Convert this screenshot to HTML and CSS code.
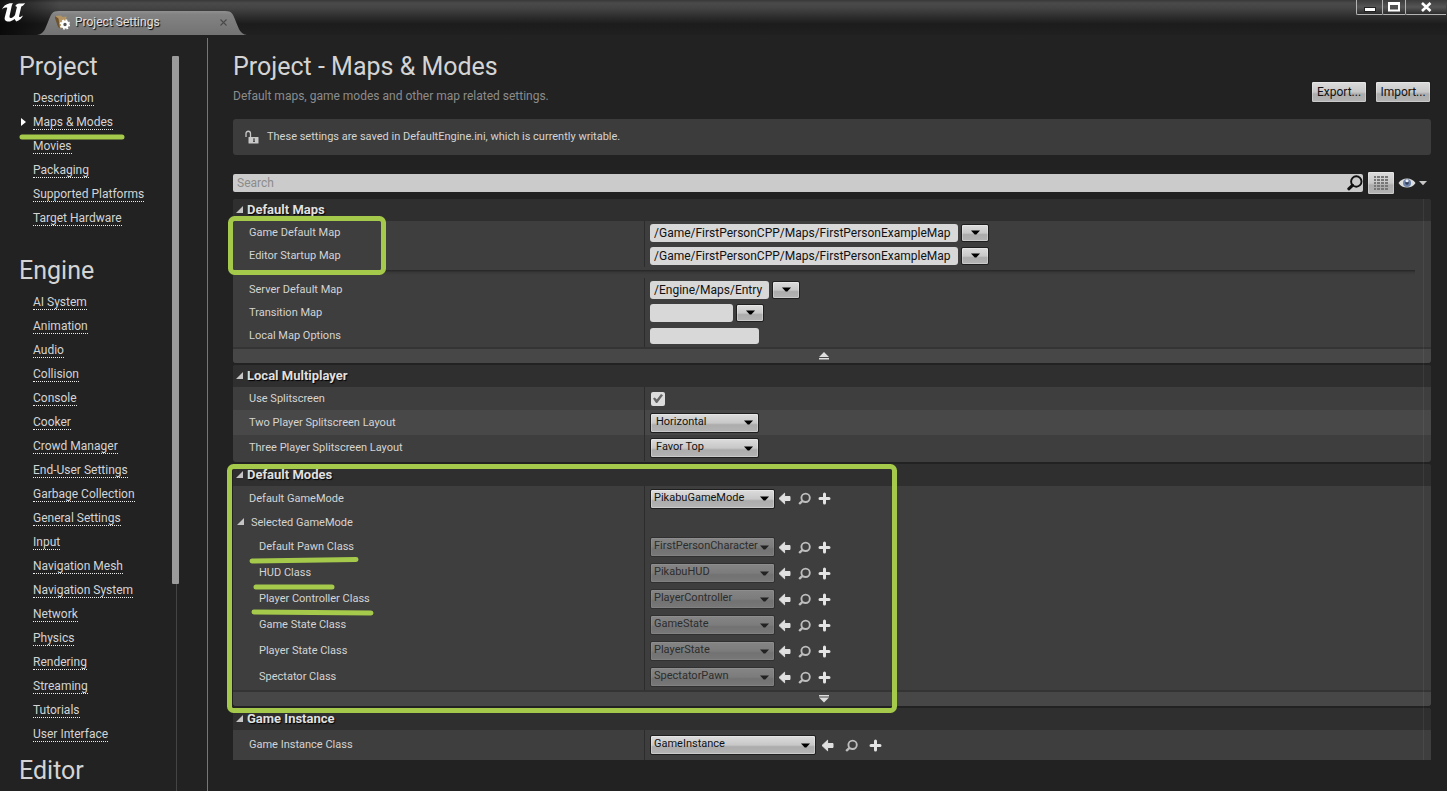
FILE: index.html
```html
<!DOCTYPE html>
<html lang="en">
<head>
<meta charset="utf-8">
<title>Project Settings</title>
<link rel="stylesheet" href="styles.css">
</head>
<body>
<svg class="defs" aria-hidden="true">
  <symbol id="back" viewBox="0 0 13 13"><path d="M1 6.500 6.600 1.200V4.500H12V8.500H6.600V11.800Z" fill="#e0e0e0" stroke="#e0e0e0" stroke-width="1" stroke-linejoin="round"/></symbol>
  <symbol id="find" viewBox="0 0 13 13"><circle cx="7.600" cy="5.800" r="4.200" fill="none" stroke="#bdbdbd" stroke-width="1.900"/><path d="M4 9.300 1.800 11.300" stroke="#bdbdbd" stroke-width="2.400" stroke-linecap="round"/></symbol>
  <symbol id="plus" viewBox="0 0 13 13"><path d="M6.500 2V11M2 6.500H11" stroke="#e4e4e4" stroke-width="3" stroke-linecap="round"/></symbol>
  <symbol id="down" viewBox="0 0 9 5"><path d="M0 0.500H9L5.300 4.500H3.700Z"/></symbol>
  <symbol id="fold" viewBox="0 0 7 7"><path d="M7 0V7H0Z" fill="#c4c4c4"/></symbol>
</svg>

<header class="titlebar">
  <svg class="logo" viewBox="0 0 24 22" aria-label="Unreal"><path d="M1 9.500C2 6.500 4.500 4 8.800 3.200H12C11.200 4 10.900 5 10.600 6.500L8.600 15.800C8.200 17.600 9 18.300 10.300 17.900 11.800 17.400 13.200 16.200 14 15L16 6.800C14.800 6.500 14.200 6 14.500 5.400 15.500 3.900 18 3.600 20 3.600 21.500 3.600 22.800 3.400 24 2.900 23.200 4.900 21.800 6 20.300 6.400L18.200 15.400C17.900 16.700 18.300 17.300 19.300 16.900L22 15.400C20.800 18.200 18.400 20.200 15.200 21.600L13.600 18.900C11.300 20.900 8.300 22 5.600 21.200 3.600 20.600 3.300 19 3.900 16.800L6.300 7.700C4.200 7.100 2.300 7.800 1 9.500Z" fill="#fff"/></svg>
  <div class="tab">
    <svg class="tab-shape" viewBox="0 0 210 24" preserveAspectRatio="none" aria-hidden="true"><defs><linearGradient id="tg" x2="0" y2="1"><stop offset="0" stop-color="#909090"/><stop offset=".15" stop-color="#828282"/><stop offset="1" stop-color="#737373"/></linearGradient></defs><path d="M0 24C7 23 8 18 11 11 14 3 15 0 22 0H188C195 0 196 3 199 11 202 18 203 23 210 24Z" fill="url(#tg)"/></svg>
    <svg class="tab-icon" viewBox="0 0 16 16" aria-hidden="true"><path d="M1 2 5 4 6 14.5 4 13 1 4Z" fill="#6d532f"/><path d="M1 2 7 1.500 8.500 3 12.500 2.500 11.500 13 6 14.500 4.500 4.500Z" fill="#b39462"/><circle cx="11" cy="10.500" r="2.900" fill="#555" stroke="#fff" stroke-width="2.400"/><circle cx="11" cy="10.500" r="4.500" fill="none" stroke="#fff" stroke-width="1.500" stroke-dasharray="1.800 1.740"/></svg>
    <span class="tab-label">Project Settings</span>
    <button class="tab-close" aria-label="Close tab"><svg viewBox="0 0 7 7"><path d="M.5 .5 6.500 6.500M6.500 .5 .5 6.500" stroke="#4a4a4a" stroke-width="1.100"/></svg></button>
  </div>
  <div class="window-buttons">
    <button aria-label="Minimize"><svg viewBox="0 0 14 12"><rect x="1.500" y="6.500" width="11" height="4" fill="#fff" stroke="#222"/></svg></button>
    <button class="narrow" aria-label="Maximize"><svg viewBox="0 0 14 12"><rect x="2" y="2.500" width="10" height="7" fill="none" stroke="#fff" stroke-width="2"/><rect x="1" y="1" width="12" height="3" fill="#fff"/></svg></button>
    <button class="wide" aria-label="Close"><svg viewBox="0 0 14 12"><path d="M3 2 11.500 10M11.500 2 3 10" stroke="#fff" stroke-width="2.600"/></svg></button>
  </div>
</header>

<div class="body">
  <nav class="sidebar">
    <div class="nav-list">
      <h2>Project</h2>
      <ul>
        <li><a href="#">Description</a></li>
        <li class="current"><a href="#">Maps &amp; Modes</a></li>
        <li><a href="#">Movies</a></li>
        <li><a href="#">Packaging</a></li>
        <li><a href="#">Supported Platforms</a></li>
        <li><a href="#">Target Hardware</a></li>
      </ul>
      <h2>Engine</h2>
      <ul class="last">
        <li><a href="#">AI System</a></li>
        <li><a href="#">Animation</a></li>
        <li><a href="#">Audio</a></li>
        <li><a href="#">Collision</a></li>
        <li><a href="#">Console</a></li>
        <li><a href="#">Cooker</a></li>
        <li><a href="#">Crowd Manager</a></li>
        <li><a href="#">End-User Settings</a></li>
        <li><a href="#">Garbage Collection</a></li>
        <li><a href="#">General Settings</a></li>
        <li><a href="#">Input</a></li>
        <li><a href="#">Navigation Mesh</a></li>
        <li><a href="#">Navigation System</a></li>
        <li><a href="#">Network</a></li>
        <li><a href="#">Physics</a></li>
        <li><a href="#">Rendering</a></li>
        <li><a href="#">Streaming</a></li>
        <li><a href="#">Tutorials</a></li>
        <li><a href="#">User Interface</a></li>
      </ul>
      <h2>Editor</h2>
    </div>
    <div class="scrollbar"><div class="thumb"></div><div class="track"></div></div>
  </nav>

  <main>
    <div class="page-head">
      <div>
        <h1>Project - Maps &amp; Modes</h1>
        <p>Default maps, game modes and other map related settings.</p>
      </div>
      <div class="actions"><button>Export...</button><button>Import...</button></div>
    </div>
    <div class="notice">
      <svg viewBox="0 0 14 14" aria-hidden="true"><path d="M1 7V3.500C1 .5 5.500 .5 5.500 3.500V7" fill="none" stroke="#c8c8c8" stroke-width="1.300"/><rect x="3.500" y="7" width="10" height="6.500" rx=".5" fill="#c8c8c8"/><path d="M8 8.500H10L9.500 10 10 12H8L8.500 10Z" fill="#3c3c3c"/></svg>
      <span>These settings are saved in DefaultEngine.ini, which is currently writable.</span>
    </div>
    <div class="search-row">
      <label class="search"><input type="search" placeholder="Search" aria-label="Search"><svg viewBox="0 0 16 16" aria-hidden="true"><circle cx="9.300" cy="6.500" r="5.200" fill="none" stroke="#111" stroke-width="1.900"/><path d="M5.500 10.300 1.800 13.800" stroke="#111" stroke-width="3" stroke-linecap="round"/></svg></label>
      <button class="grid-view" aria-label="Property matrix"><svg viewBox="0 0 14 14"><path d="M0 1H14M0 4H14M0 7H14M0 10H14M0 13H14" stroke="#777" stroke-width="2" stroke-dasharray="2 1 3 1 3 1 3 0"/></svg></button>
      <button class="eye" aria-label="View options"><svg viewBox="0 0 30 12"><path d="M0.500 6C4 0 14 0 17.500 6 14 12 4 12 .5 6Z" fill="#ddd"/><circle cx="9" cy="6" r="4" fill="#6d83a8"/><circle cx="9" cy="6" r="1.800" fill="#333f58"/><circle cx="9" cy="3.800" r="1.500" fill="#e8eefa"/><path d="M21 4H29L25 8.300Z" fill="#c8c8c8"/></svg></button>
    </div>

    <div class="details">
      <section>
        <h3><svg><use href="#fold"/></svg>Default Maps</h3>
        <div class="row"><label for="gdm">Game Default Map</label><div class="value"><input id="gdm" class="text w-long" value="/Game/FirstPersonCPP/Maps/FirstPersonExampleMap"><button class="drop" aria-label="Choose map"><svg><use href="#down"/></svg></button></div></div>
        <div class="row"><label for="esm">Editor Startup Map</label><div class="value"><input id="esm" class="text w-long" value="/Game/FirstPersonCPP/Maps/FirstPersonExampleMap"><button class="drop" aria-label="Choose map"><svg><use href="#down"/></svg></button></div></div>
        <div class="divider"></div>
        <div class="row"><label for="sdm">Server Default Map</label><div class="value"><input id="sdm" class="text w-entry" value="/Engine/Maps/Entry"><button class="drop" aria-label="Choose map"><svg><use href="#down"/></svg></button></div></div>
        <div class="row"><label for="tm">Transition Map</label><div class="value"><input id="tm" class="text w-short"><button class="drop" aria-label="Choose map"><svg><use href="#down"/></svg></button></div></div>
        <div class="row"><label for="lmo">Local Map Options</label><div class="value"><input id="lmo" class="text slim w-mid"></div></div>
        <button class="more" aria-label="Hide advanced"><svg viewBox="0 0 10 8"><path d="M5 0 10 5H0ZM0 6H10V7.500H0Z" fill="#ddd"/></svg></button>
      </section>

      <section>
        <h3><svg><use href="#fold"/></svg>Local Multiplayer</h3>
        <div class="row"><label for="split">Use Splitscreen</label><div class="value"><input id="split" class="check" type="checkbox" checked></div></div>
        <div class="row mid light"><label for="two">Two Player Splitscreen Layout</label><div class="value"><span class="select w-mid"><select id="two" class="inset"><option>Horizontal</option></select><svg><use href="#down"/></svg></span></div></div>
        <div class="row tall last-row"><label for="three">Three Player Splitscreen Layout</label><div class="value"><span class="select w-mid"><select id="three" class="inset"><option>Favor Top</option></select><svg><use href="#down"/></svg></span></div></div>
      </section>

      <section>
        <h3><svg><use href="#fold"/></svg>Default Modes</h3>
        <div class="row mid"><label for="dgm">Default GameMode</label><div class="value"><span class="select w-class"><select id="dgm"><option>PikabuGameMode</option></select><svg><use href="#down"/></svg></span><span class="tools"><button aria-label="Use selected"><svg><use href="#back"/></svg></button><button aria-label="Browse"><svg><use href="#find"/></svg></button><button aria-label="Add"><svg><use href="#plus"/></svg></button></span></div></div>
        <div class="row group"><span class="label"><svg><use href="#fold"/></svg>Selected GameMode</span><div class="value"></div></div>
        <div class="row tall child"><label for="c1">Default Pawn Class</label><div class="value"><span class="select w-class off"><select id="c1" disabled><option>FirstPersonCharacter</option></select><svg><use href="#down"/></svg></span><span class="tools"><button aria-label="Use selected"><svg><use href="#back"/></svg></button><button aria-label="Browse"><svg><use href="#find"/></svg></button><button aria-label="Add"><svg><use href="#plus"/></svg></button></span></div></div>
        <div class="row tall child"><label for="c2">HUD Class</label><div class="value"><span class="select w-class off"><select id="c2" disabled><option>PikabuHUD</option></select><svg><use href="#down"/></svg></span><span class="tools"><button aria-label="Use selected"><svg><use href="#back"/></svg></button><button aria-label="Browse"><svg><use href="#find"/></svg></button><button aria-label="Add"><svg><use href="#plus"/></svg></button></span></div></div>
        <div class="row tall child"><label for="c3">Player Controller Class</label><div class="value"><span class="select w-class off"><select id="c3" disabled><option>PlayerController</option></select><svg><use href="#down"/></svg></span><span class="tools"><button aria-label="Use selected"><svg><use href="#back"/></svg></button><button aria-label="Browse"><svg><use href="#find"/></svg></button><button aria-label="Add"><svg><use href="#plus"/></svg></button></span></div></div>
        <div class="row tall child"><label for="c4">Game State Class</label><div class="value"><span class="select w-class off"><select id="c4" disabled><option>GameState</option></select><svg><use href="#down"/></svg></span><span class="tools"><button aria-label="Use selected"><svg><use href="#back"/></svg></button><button aria-label="Browse"><svg><use href="#find"/></svg></button><button aria-label="Add"><svg><use href="#plus"/></svg></button></span></div></div>
        <div class="row tall child"><label for="c5">Player State Class</label><div class="value"><span class="select w-class off"><select id="c5" disabled><option>PlayerState</option></select><svg><use href="#down"/></svg></span><span class="tools"><button aria-label="Use selected"><svg><use href="#back"/></svg></button><button aria-label="Browse"><svg><use href="#find"/></svg></button><button aria-label="Add"><svg><use href="#plus"/></svg></button></span></div></div>
        <div class="row tall child"><label for="c6">Spectator Class</label><div class="value"><span class="select w-class off"><select id="c6" disabled><option>SpectatorPawn</option></select><svg><use href="#down"/></svg></span><span class="tools"><button aria-label="Use selected"><svg><use href="#back"/></svg></button><button aria-label="Browse"><svg><use href="#find"/></svg></button><button aria-label="Add"><svg><use href="#plus"/></svg></button></span></div></div>
        <button class="more" aria-label="Show advanced"><svg viewBox="0 0 10 8"><path d="M5 7.500 10 2.500H0ZM0 0H10V1.500H0Z" fill="#ddd"/></svg></button>
      </section>

      <section class="open-end">
        <h3><svg><use href="#fold"/></svg>Game Instance</h3>
        <div class="row final"><label for="gi">Game Instance Class</label><div class="value"><span class="select w-instance"><select id="gi"><option>GameInstance</option></select><svg><use href="#down"/></svg></span><span class="tools spaced"><button aria-label="Use selected"><svg><use href="#back"/></svg></button><button aria-label="Browse"><svg><use href="#find"/></svg></button><button aria-label="Add"><svg><use href="#plus"/></svg></button></span></div></div>
      </section>
    </div>
  </main>
</div>

<svg class="marks" aria-hidden="true">
  <g fill="none" stroke="#a5c94a" stroke-width="5" stroke-linecap="round">
    <rect x="230.500" y="218.500" width="153" height="54" rx="4"/>
    <rect x="229.500" y="466.500" width="665" height="244" rx="4"/>
    <path d="M22 137H122M252 561 356 559.500M256 587H332M254 612 371 613"/>
  </g>
</svg>
</body>
</html>
```

FILE: styles.css
```css
* { box-sizing: border-box; }
body {
  margin: 0;
  height: 100vh;
  display: flex;
  flex-direction: column;
  overflow: hidden;
  background: #222;
  color: #d4d4d4;
  font: 11px/14px Roboto, "Liberation Sans", sans-serif;
}
button, input, select { font: inherit; margin: 0; }
button { border: 0; padding: 0; background: none; color: inherit; }
h1, h2, h3, p, ul { margin: 0; padding: 0; font-weight: 400; }
svg { display: block; flex: none; }
.defs { position: absolute; width: 0; height: 0; }

/* Title bar */
.titlebar {
  flex: none;
  height: 35px;
  display: flex;
  align-items: flex-start;
  background:
    linear-gradient(90deg, rgba(0,0,0,.7), transparent 60px),
    linear-gradient(#383838, #4a4a4a 3px, #444 8px, #2a2a2a 18px, #1c1c1c 24px, #202020);
}
.logo { width: 24px; height: 22px; margin-left: 1px; }
.tab {
  position: relative;
  width: 210px;
  height: 24px;
  margin: 11px 0 0 12px;
  padding: 0 20px 2px 17px;
  display: flex;
  align-items: center;
  gap: 5px;
  color: #e2e2e2;
  font-size: 12px;
}
.tab-shape { position: absolute; inset: 0; width: 100%; height: 100%; }
.tab-icon { position: relative; width: 16px; height: 16px; }
.tab-label { position: relative; flex: 1; text-shadow: 1px 1px 1px #000; }
.tab-close { position: relative; }
.tab-close svg { width: 7px; height: 7px; }
.window-buttons { margin: 0 1px 0 auto; display: flex; }
.window-buttons button {
  width: 26px;
  height: 15px;
  border: 1px solid #b4b4b4;
  border-top: 0;
  border-right: 0;
  border-radius: 0 0 0 2px;
  background: linear-gradient(#3c3c3c, #555 50%, #2c2c2c);
  display: grid;
  place-items: center;
}
.window-buttons .narrow { width: 23px; }
.window-buttons .wide { width: 41px; }
.window-buttons svg { width: 14px; height: 12px; }

.body { flex: 1; min-height: 0; display: flex; }

/* Section list */
.sidebar {
  flex: none;
  width: 208px;
  margin-top: 3px;
  padding: 13px 28px 0 19px;
  display: flex;
  justify-content: space-between;
  border-right: 1px solid #777;
}
.nav-list h2 { font-size: 25px; line-height: 32px; }
.nav-list ul { list-style: none; padding: 3px 0 25px 14px; }
.nav-list .last { padding-bottom: 9px; }
.nav-list li { height: 24px; display: flex; align-items: center; font-size: 12px; position: relative; }
.nav-list a { color: inherit; text-decoration: none; border-bottom: 1px dotted #eee; line-height: 14px; }
.current::before {
  content: "";
  position: absolute;
  left: -12px;
  border: 4px solid transparent;
  border-left: 5px solid #fff;
  border-right: 0;
}
.scrollbar { padding-top: 5px; display: flex; flex-direction: column; align-items: center; }
.thumb { width: 7px; flex: 528 0 0; background: #9b9b9b; border-radius: 1px; }
.track { width: 1px; flex: 207 0 0; margin-left: 2px; background: #444; }

/* Page */
main { flex: 1; min-width: 0; padding: 16px 16px 0 25px; }
.page-head { display: flex; justify-content: space-between; align-items: flex-end; height: 68px; padding-bottom: 16px; }
h1 { font-size: 25px; line-height: 32px; }
.page-head p { margin: 6px 0 0; font-size: 12px; color: #8c8c8c; }
.actions { display: flex; gap: 8px; }
.actions button, .drop, .select, .grid-view {
  color: #111;
  background: linear-gradient(#dcdcdc, #c8c8c8 50%, #acacac 60%, #b4b4b4);
  border: 1px solid #1f1f1f;
  border-radius: 2px;
  box-shadow: inset 0 0 0 1px rgba(255,255,255,.3);
}
.actions button { width: 56px; height: 22px; font-size: 12px; }
.notice {
  height: 36px;
  display: flex;
  align-items: center;
  gap: 8px;
  padding: 0 12px;
  background: #3c3c3c;
  border-radius: 3px;
}
.notice svg { width: 14px; height: 14px; }
.search-row { display: flex; align-items: center; height: 24px; margin: 16px 0 4px; }
.search { flex: 1; display: flex; align-items: center; height: 18px; background: #cbcbcb; border-radius: 2px; }
.search input { flex: 1; border: 0; outline: 0; background: none; padding: 0 4px; font-size: 12px; height: 18px; color: #111; }
.search input::placeholder { color: #8c8c8c; opacity: 1; }
.search svg { width: 16px; height: 16px; }
.grid-view { width: 28px; height: 24px; margin-left: 4px; display: grid; place-items: center; }
.grid-view svg { width: 14px; height: 14px; }
.eye { margin: 0 3px; }
.eye svg { width: 30px; height: 12px; }

/* Property sections */
.details { position: relative; display: flex; flex-direction: column; gap: 2px; }
.details::after { content: ""; position: absolute; top: 0; bottom: 0; right: 7px; width: 1px; background: rgba(255,255,255,.06); }
section { background: #3e3e3e; border-radius: 3px; overflow: hidden; }
.open-end { border-radius: 3px 3px 0 0; }
h3 {
  display: flex;
  align-items: center;
  gap: 4px;
  height: 22px;
  padding-left: 3px;
  background: #2f2f2f;
  font-size: 13px;
  font-weight: 700;
  color: #e0e0e0;
  text-shadow: 1px 1px 1px #000;
}
h3 svg, .group svg { width: 7px; height: 7px; margin-bottom: 2px; }
.row { display: flex; height: 23px; }
.row.mid { height: 25px; }
.row.tall { height: 26px; }
.row.last-row { height: 27px; padding-bottom: 1px; }
.row.final { height: 30px; }
.row.light { background: #484848; }
.row label, .row .label { width: 411px; flex: none; display: flex; align-items: center; padding-left: 16px; }
.row .label { padding-left: 4px; gap: 7px; }
.row.child label { padding-left: 26px; }
.value { flex: 1; display: flex; align-items: center; gap: 3px; padding-left: 5px; border-left: 1px solid #2c2c2c; }
.divider { height: 11px; padding: 3px 16px 0 0; }
.divider::before { content: ""; display: block; height: 5px; background: linear-gradient(#262626, #383838 50%, #3e3e3e); }
.text {
  height: 18px;
  padding: 0 4px;
  border: 0;
  border-radius: 3px;
  background: #d8d8d8;
  color: #111;
  font-size: 12px;
}
.text.slim { height: 16px; }
.w-long { width: 308px; }
.w-entry { width: 119px; }
.w-short { width: 83px; }
.w-mid { width: 109px; }
.w-class { width: 125px; }
.w-instance { width: 166px; }
.drop { width: 28px; height: 18px; display: grid; place-items: center; }
.drop svg, .select svg { width: 9px; height: 5px; fill: #000; }
.select { position: relative; display: flex; align-items: center; height: 20px; }
.select select {
  appearance: none;
  width: 100%;
  height: 18px;
  border: 0;
  background: none;
  color: #111;
  padding: 0 16px 2px 3px;
  opacity: 1;
}
.select select.inset { padding-left: 5px; }
.select svg { position: absolute; right: 5px; pointer-events: none; }
.select.off {
  background: linear-gradient(#858585, #7c7c7c 50%, #727272 60%, #787878);
  border-color: #303030;
  box-shadow: inset 0 0 0 1px rgba(255,255,255,.08);
}
.select.off select { color: #2c2c2c; }
.select.off svg { fill: #222; }
.check { appearance: none; width: 14px; height: 14px; margin-left: 1px; border-radius: 2px; background: #dcdcdc; display: grid; place-items: center; }
.check:checked::before { content: ""; width: 10px; height: 9px; background: #666; clip-path: polygon(0 50%, 18% 38%, 38% 60%, 80% 0, 100% 14%, 42% 100%, 30% 100%); }
.tools { display: flex; gap: 7px; }
.tools.spaced { gap: 11px; padding-left: 2px; }
.tools svg { width: 13px; height: 13px; }
.more { width: 100%; height: 16px; border-top: 2px solid #343434; background: #474747; display: grid; place-items: center; padding-right: 16px; }
.more svg { width: 10px; height: 8px; }

/* Highlighter strokes drawn over the page */
.marks { position: absolute; inset: 0; width: 100%; height: 100%; pointer-events: none; }
```
